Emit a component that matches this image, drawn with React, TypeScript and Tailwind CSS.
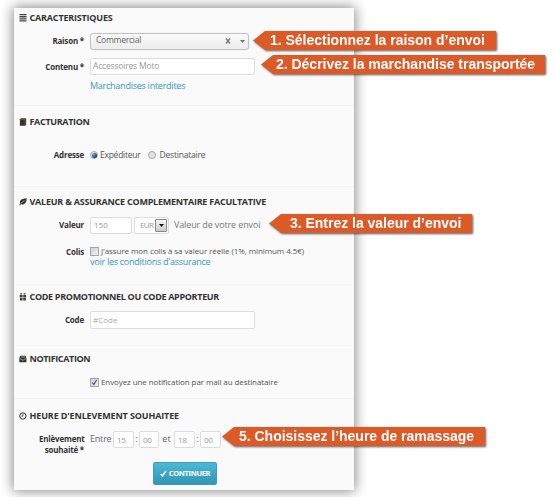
import type { ReactNode } from "react";

function Section({ icon, title, titleClass, className, children }: { icon: ReactNode; title: string; titleClass: string; className: string; children: ReactNode }) {
  return (
    <section className={`px-[5px] ${className}`}>
      <h2 className="flex h-3 items-center text-[#333]">
        <span className="flex w-[10.5px] shrink-0 items-center">{icon}</span>
        <span className={`whitespace-nowrap text-[9px] leading-3 font-bold ${titleClass}`}>{title}</span>
      </h2>
      {children}
    </section>
  );
}

function Row({ label, labelClass = "-mt-px", className = "", children }: { label?: string; labelClass?: string; className?: string; children: ReactNode }) {
  return (
    <div className={`flex items-center ${className}`}>
      <div className={`mr-[6px] w-[65px] shrink-0 text-right text-[8px] leading-[11px] font-bold tracking-[-0.2px] text-[#333] ${labelClass}`}>{label}</div>
      {children}
    </div>
  );
}

const field = "flex shrink-0 items-center rounded-[2px] border border-[#ddd] bg-white text-[8px] text-[#999]";

function Callout({ className, textClass, children }: { className: string; textClass: string; children: ReactNode }) {
  return (
    <div className={`absolute h-[19px] drop-shadow-[1px_1px_1px_rgba(0,0,0,0.65)] ${className}`}>
      <div className="flex h-full items-center bg-[#dc5a28] [clip-path:polygon(12px_0,100%_0,100%_100%,12px_100%,0_50%)]">
        <span className={`whitespace-nowrap font-['Liberation_Sans',sans-serif] text-[14px] leading-[19px] font-bold tracking-[-0.02px] text-white ${textClass}`}>{children}</span>
      </div>
    </div>
  );
}

const ListIcon = () => (
  <svg width="8" height="8" viewBox="0 0 8 8" fill="#444">
    <path d="M.5 0h7v1.300h-7zM.5 2.100h7v1.300h-7zM.5 4.200h7v1.300h-7zM.5 6.300h7v1.300h-7z" />
  </svg>
);
const BookIcon = () => (
  <svg width="8" height="8" viewBox="0 0 8 8">
    <path d="M1 1.2 2 .2h5.2v6.4L6.2 7.8H.8z" fill="#333" />
    <path d="M1.6 1.3h4.7v5.4" stroke="#999" strokeWidth=".4" fill="none" />
  </svg>
);
const LeafIcon = () => (
  <svg width="8" height="8" viewBox="0 0 8 8">
    <path d="M7.8.2C5.2.8 2 .5 1.1 3.2.8 4.2.9 5 1.2 5.6L.1 7.2l.7.4 1-1.3C4.800 6.900 7.500 5.500 7.800.2Z" fill="#333" />
    <path d="M1.800 5.300 5.500 2.500" stroke="#ddd" strokeWidth=".6" />
  </svg>
);
const GiftIcon = () => (
  <svg width="8" height="8" viewBox="0 0 8 8" fill="#444">
    <path d="M.7 2h2.900v2.200H.7zM4.200 2h2.900v2.200H4.200zM.9 4.700h2.700v2.900H.9zM4.200 4.700h2.700v2.900H4.200zM1.200.3h2v1.200h-2zM4.600.3h2v1.200h-2z" />
  </svg>
);
const MailIcon = () => (
  <svg width="8" height="8" viewBox="0 0 8 8">
    <path d="M.9.8h5.900v1.400l.6.6v4.400H.3V2.800l.6-.6z" fill="#333" />
    <path d="m.8 3.600 3 1.700 3-1.700M1.700 2h4.400" fill="none" stroke="#ddd" strokeWidth=".6" />
  </svg>
);
const ClockIcon = () => (
  <svg width="8" height="8" viewBox="0 0 8 8" fill="none" stroke="#333" strokeWidth="1">
    <circle cx="3.900" cy="4" r="3.200" />
    <path d="M3.900 2v2.200H2.400" strokeWidth=".8" />
  </svg>
);

function Radio({ checked = false }: { checked?: boolean }) {
  return (
    <span className="flex size-[8px] shrink-0 items-center justify-center rounded-full border border-[#a9a9a9] bg-[#e4e4e4]">
      {checked && <span className="size-[5px] rounded-full bg-[radial-gradient(circle_at_35%_35%,#58b5df,#0d4774_65%)]" />}
    </span>
  );
}

function Checkbox({ checked = false }: { checked?: boolean }) {
  return (
    <span className="flex size-[9px] shrink-0 items-center justify-center border border-[#a5a5a5] bg-linear-to-br from-[#ccd0d5] to-[#f3f3f3]">
      {checked && (
        <svg width="7" height="7" viewBox="0 0 7 7">
          <path d="m1.300 3.500 1.500 2L5.600 1" fill="none" stroke="#344da0" strokeWidth="1.200" />
        </svg>
      )}
    </span>
  );
}

function TimeField({ value, className }: { value: string; className: string }) {
  return <div className={`${field} h-[17px] pl-[3px] pt-px tracking-[-0.2px] ${className}`}>{value}</div>;
}

export default function App() {
  return (
    <main className="relative h-[497px] w-[555px] overflow-hidden bg-white pt-2 pl-[14px] font-['Open_Sans','Noto_Sans',sans-serif]">
      <div className="h-[482px] w-[340px] bg-[#fafafa] shadow-[0_0_12px_1px_rgba(0,0,0,0.48)]">
        <Section icon={<ListIcon />} title="CARACTERISTIQUES" titleClass="tracking-[-0.19px]" className="h-[97px] pt-[4px]">
          <Row label="Raison *" className="mt-[8px] h-[18px]">
            <div className="flex h-[17px] w-[159px] items-center rounded-[3px] border border-[#c2c2c2] bg-linear-to-b from-[#fafafa] to-[#ececec] pl-[5px] text-[8.5px] text-[#666] shadow-[0_0_1px_#ccc]">
              <span className="-mt-px tracking-[-0.25px]">Commercial</span>
              <svg className="mr-[9px] ml-auto" width="6" height="6" viewBox="0 0 6 6" stroke="#777" strokeWidth="1.300"><path d="m1 .5 4 5M5 .5l-4 5" /></svg>
              <svg className="mr-[3px]" width="5" height="3" viewBox="0 0 5 3"><path d="M0 0h5L2.500 3z" fill="#777" /></svg>
            </div>
          </Row>
          <Row label="Contenu *" labelClass="" className="mt-[8px] h-[17px]">
            <div className={`${field} h-[17px] w-[165px] pl-[2px]`}><span className="text-[8.5px] tracking-[-0.18px]">Accessoires Moto</span></div>
          </Row>
          <a className="mt-[4px] ml-[71px] block w-max text-[9px] leading-[14px] tracking-[-0.250px] text-[#3498cf]">Marchandises interdites</a>
        </Section>

        <Section icon={<BookIcon />} title="FACTURATION" titleClass="tracking-[-0.330px]" className="h-[81px] border-t border-[#f3f3f3] pt-[10px]">
          <Row label="Adresse" className="mt-[20px] h-[14px]">
            <label className="flex items-center gap-[2px] text-[8.5px] tracking-[-0.25px] text-[#555]"><Radio checked /><span>Expéditeur</span></label>
            <label className="ml-[8px] flex items-center gap-[3px] text-[8.5px] tracking-[-0.2px] text-[#555]"><Radio /><span>Destinataire</span></label>
          </Row>
        </Section>

        <Section icon={<LeafIcon />} title="VALEUR & ASSURANCE COMPLEMENTAIRE FACULTATIVE" titleClass="tracking-[-0.230px]" className="h-[98px] border-t border-[#f3f3f3] pt-[9px]">
          <Row label="Valeur" className="mt-[8px] h-[18px]">
            <div className={`${field} h-[17px] w-[42px] pl-[3px]`}>150</div>
            <div className={`${field} ml-[2px] h-[17px] w-[35px] justify-between pr-px pl-[5px]`}>
              <span className="w-[14px] tracking-[-0.6px] whitespace-nowrap">EUR</span>
              <span className="flex h-[13px] w-[12px] items-center justify-center rounded-[1px] border border-[#888] bg-linear-to-b from-[#f5f5f5] to-[#ccc]">
                <svg width="5" height="3" viewBox="0 0 5 3"><path d="M0 0h5L2.500 3z" fill="#111" /></svg>
              </span>
            </div>
            <span className="ml-[5px] text-[9px] tracking-[-0.13px] whitespace-nowrap text-[#777]">Valeur de votre envoi</span>
          </Row>
          <Row label="Colis" labelClass="" className="mt-[11px] h-[12px]">
            <Checkbox />
            <span className="ml-[2px] text-[8px] tracking-[-0.08px] whitespace-nowrap text-[#555]">J'assure mon colis à sa valeur réelle (1%, minimum 4.5€)</span>
          </Row>
          <a className="-mt-px ml-[71px] block w-max text-[9px] leading-[11px] tracking-[-0.260px] text-[#3498cf]">voir les conditions d'assurance</a>
        </Section>

        <Section icon={<GiftIcon />} title="CODE PROMOTIONNEL OU CODE APPORTEUR" titleClass="tracking-[-0.320px]" className="h-[61px] border-t border-[#f6f6f6] pt-[6px]">
          <Row label="Code" className="mt-[8px] h-[18px]">
            <div className={`${field} h-[18px] w-[165px] pl-[2px] text-[#aaa]`}>#Code</div>
          </Row>
        </Section>

        <Section icon={<MailIcon />} title="NOTIFICATION" titleClass="tracking-[-0.370px]" className="h-[53px] border-t border-[#f6f6f6] pt-[7px]">
          <Row className="mt-[11px] h-[12px]">
            <Checkbox checked />
            <span className="ml-[2px] text-[8px] tracking-[-0.1px] whitespace-nowrap text-[#555]">Envoyez une notification par mail au destinataire</span>
          </Row>
        </Section>

        <Section icon={<ClockIcon />} title="HEURE D'ENLEVEMENT SOUHAITEE" titleClass="tracking-[-0.130px]" className="h-[92px] border-t border-[#f3f3f3] pt-[11px]">
          <Row label="Enlèvement souhaité *" className="mt-[8px] h-[18px]" labelClass="mt-[9px] pl-5">
            <div className="flex items-center text-[9px] text-[#666]">
              <span className="w-[23px] tracking-[-0.2px]">Entre</span>
              <TimeField value="15" className="w-[21px]" />
              <span className="w-[5px] text-center">:</span>
              <TimeField value="00" className="w-[20px]" />
              <span className="w-[15px] text-center">et</span>
              <TimeField value="18" className="w-[21px]" />
              <span className="w-[5px] text-center">:</span>
              <TimeField value="00" className="w-[21px]" />
            </div>
          </Row>
          <button className="mt-[14px] ml-[134px] flex h-[23px] w-[64px] items-center justify-center gap-[2px] rounded-[2px] border border-[#3a9dbb] bg-linear-to-b from-[#4db8d6] to-[#2f96b4] text-[7.5px] font-bold tracking-[-0.35px] text-white">
            <svg width="7" height="7" viewBox="0 0 7 7"><path d="m.8 4 1.700 2L6 .8" fill="none" stroke="#fff" strokeWidth="1.500" /></svg>
            <span>CONTINUER</span>
          </button>
        </Section>
      </div>

      <Callout className="top-[31px] left-[253px] w-[243px]" textClass="pl-[17px]">1. Sélectionnez la raison d’envoi</Callout>
      <Callout className="top-[55px] left-[261px] w-[284px]" textClass="pl-[15px]">2. Décrivez la marchandise transportée</Callout>
      <Callout className="top-[214px] left-[269px] w-[203px]" textClass="pl-[21px]">3. Entrez la valeur d’envoi</Callout>
      <Callout className="top-[427px] left-[222px] w-[263px]" textClass="pl-[17px]">5. Choisissez l’heure de ramassage</Callout>
    </main>
  );
}
